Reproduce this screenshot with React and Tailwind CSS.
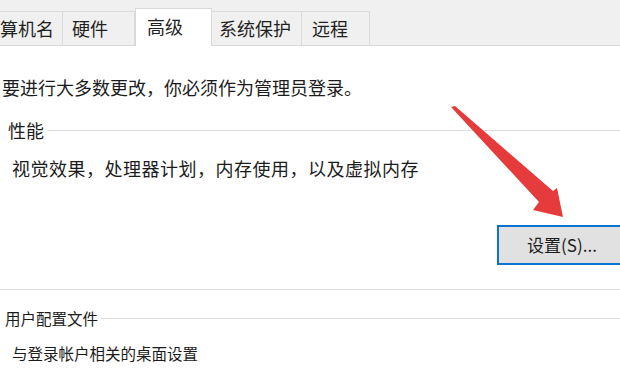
import React from "react";

const tabs = [
  { label: "计算机名", className: "w-[90px] -ml-[27px] pl-[9px]" },
  { label: "硬件", className: "w-[72px] pl-[9px]" },
  { label: "高级", active: true, className: "w-[77px] pl-[11px]" },
  { label: "系统保护", className: "w-[90px] pl-[7px]" },
  { label: "远程", className: "w-[68px] pl-[10px]" },
];

function Tab({ label, active, className }) {
  if (active) {
    return (
      <div
        className={`h-[38px] -mb-px bg-white border border-b-0 border-[#d9d9d9] flex items-center pb-[3px] text-[18px] text-[#1f1f1f] shrink-0 ${className}`}
      >
        {label}
      </div>
    );
  }
  return (
    <div
      className={`h-[34px] bg-[#f0f0f0] border border-b-0 border-l-0 border-[#dadada] flex items-center text-[18px] text-[#1f1f1f] shrink-0 ${className}`}
    >
      {label}
    </div>
  );
}

export default function App() {
  return (
    <div
      className="relative w-[620px] h-[384px] overflow-hidden bg-white text-[#1c1c1c]"
      style={{ fontFamily: '"Noto Sans CJK SC", "Noto Sans", sans-serif' }}
    >
      {/* tab strip */}
      <div className="h-[46px] bg-[#f0f0f0] flex items-end border-b border-[#dadada]">
        {tabs.map((t) => (
          <Tab key={t.label} {...t} />
        ))}
      </div>

      <div className="flex flex-col">
        <p className="mt-[29px] ml-[2px] text-[18px] leading-[24px]">
          要进行大多数更改，你必须作为管理员登录。
        </p>

        {/* 性能 */}
        <div className="mt-[19px] flex items-center h-[24px]">
          <span className="ml-[8px] text-[18px] leading-[24px]">性能</span>
          <div className="flex-1 ml-[4px] h-px bg-[#dcdcdc]" />
        </div>
        <p className="mt-[14px] ml-[12px] text-[18px] leading-[24px] tracking-[0.5px]">
          视觉效果，处理器计划，内存使用，以及虚拟内存
        </p>
        <button className="mt-[45px] ml-[497px] w-[130px] h-[40px] shrink-0 border-2 border-[#0a74d0] bg-[#e1e1e1] text-[17px] text-[#1c1c1c] flex items-center justify-center">
          设置(S)...
        </button>
        <div className="mt-[24px] h-px bg-[#dcdcdc]" />

        {/* 用户配置文件 */}
        <div className="mt-[17px] flex items-center h-[22px]">
          <span className="ml-[5px] text-[15.5px] leading-[22px]">用户配置文件</span>
          <div className="flex-1 ml-[3px] h-px bg-[#dcdcdc]" />
        </div>
        <p className="mt-[13px] ml-[12px] text-[15.5px] leading-[22px]">
          与登录帐户相关的桌面设置
        </p>
      </div>

      {/* red arrow annotation */}
      <svg
        className="absolute left-0 top-0 pointer-events-none"
        width="620"
        height="384"
        viewBox="0 0 620 384"
      >
        <polygon
          points="451,107 455,106 553,191 557,188 563,217 533,210 539,202"
          fill="#e63b3d"
        />
      </svg>
    </div>
  );
}
